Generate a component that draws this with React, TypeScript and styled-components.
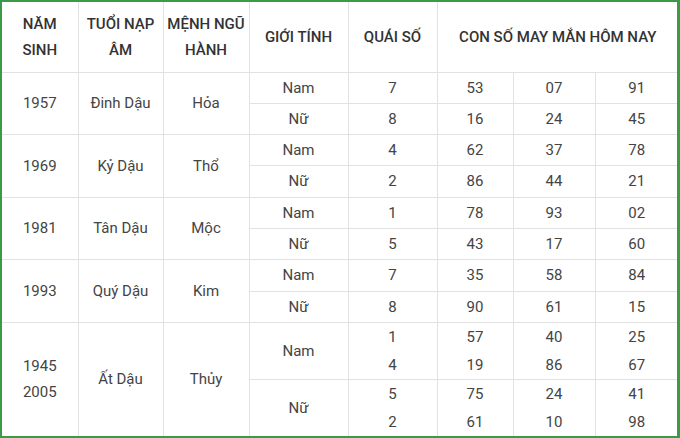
import React from 'react';
import styled, { createGlobalStyle } from 'styled-components';

const GlobalStyle = createGlobalStyle`
  html, body {
    margin: 0;
    padding: 0;
    background: #ffffff;
  }
  body {
    font-family: Roboto, "Noto Sans", "Liberation Sans", sans-serif;
  }
`;

const Frame = styled.div`
  width: 680px;
  height: 438px;
  box-sizing: border-box;
  border: 2px solid #3b9a48;
  border-right-width: 3px;
  background: #fff;
  overflow: hidden;
`;

const Table = styled.table`
  width: 100%;
  height: 100%;
  table-layout: fixed;
  border-collapse: collapse;
  color: #444;
  font-size: 15px;
`;

const Head = styled.th`
  font-weight: 500;
  color: #333;
  font-size: 15px;
  line-height: 26px;
  text-align: center;
  vertical-align: middle;
  padding: 0;
  border-right: 1px solid #e2e2e2;
  border-bottom: 1px solid #e2e2e2;
  &:last-child {
    border-right: none;
  }
`;

const Cell = styled.td<{ $last?: boolean }>`
  text-align: center;
  vertical-align: middle;
  padding: 0;
  line-height: ${({ $last }) => ($last ? '28px' : '20px')};
  border-right: 1px solid #e2e2e2;
  border-bottom: 1px solid #e2e2e2;
  &:last-child {
    border-right: none;
  }
`;

const YearCell = styled(Cell)`
  line-height: 26px;
`;

const Row = styled.tr<{ $h: number }>`
  height: ${({ $h }) => $h}px;
  &:last-child td {
    border-bottom: none;
  }
`;

const HeadRow = styled.tr`
  height: 70px;
`;

type Line = { gender: string; qs: string[]; nums: string[][] };
type Group = { years: string[]; tuoi: string; menh: string; h: number[]; lines: Line[] };

const groups: Group[] = [
  {
    years: ['1957'], tuoi: 'Đinh Dậu', menh: 'Hỏa', h: [31, 31],
    lines: [
      { gender: 'Nam', qs: ['7'], nums: [['53'], ['07'], ['91']] },
      { gender: 'Nữ', qs: ['8'], nums: [['16'], ['24'], ['45']] },
    ],
  },
  {
    years: ['1969'], tuoi: 'Kỷ Dậu', menh: 'Thổ', h: [31, 32],
    lines: [
      { gender: 'Nam', qs: ['4'], nums: [['62'], ['37'], ['78']] },
      { gender: 'Nữ', qs: ['2'], nums: [['86'], ['44'], ['21']] },
    ],
  },
  {
    years: ['1981'], tuoi: 'Tân Dậu', menh: 'Mộc', h: [31, 31],
    lines: [
      { gender: 'Nam', qs: ['1'], nums: [['78'], ['93'], ['02']] },
      { gender: 'Nữ', qs: ['5'], nums: [['43'], ['17'], ['60']] },
    ],
  },
  {
    years: ['1993'], tuoi: 'Quý Dậu', menh: 'Kim', h: [32, 31],
    lines: [
      { gender: 'Nam', qs: ['7'], nums: [['35'], ['58'], ['84']] },
      { gender: 'Nữ', qs: ['8'], nums: [['90'], ['61'], ['15']] },
    ],
  },
  {
    years: ['1945', '2005'], tuoi: 'Ất Dậu', menh: 'Thủy', h: [57, 57],
    lines: [
      { gender: 'Nam', qs: ['1', '4'], nums: [['57', '19'], ['40', '86'], ['25', '67']] },
      { gender: 'Nữ', qs: ['5', '2'], nums: [['75', '61'], ['24', '10'], ['41', '98']] },
    ],
  },
];

const widths = [76, 85, 86, 99, 89, 76, 82, 83];

const stack = (items: string[]) =>
  items.map((v, i) => (
    <React.Fragment key={i}>
      {i > 0 && <br />}
      {v}
    </React.Fragment>
  ));

export default function App() {
  return (
    <>
      <GlobalStyle />
      <Frame>
        <Table>
          <colgroup>
            {widths.map((w, i) => (
              <col key={i} style={{ width: w }} />
            ))}
          </colgroup>
          <thead>
            <HeadRow>
              <Head>NĂM<br />SINH</Head>
              <Head>TUỔI NẠP<br />ÂM</Head>
              <Head>MỆNH NGŨ<br />HÀNH</Head>
              <Head>GIỚI TÍNH</Head>
              <Head>QUÁI SỐ</Head>
              <Head colSpan={3}>CON SỐ MAY MẮN HÔM NAY</Head>
            </HeadRow>
          </thead>
          <tbody>
            {groups.map((g) =>
              g.lines.map((l, li) => {
                const multi = l.qs.length > 1;
                return (
                  <Row key={g.years[0] + li} $h={g.h[li]}>
                    {li === 0 && (
                      <>
                        <YearCell rowSpan={2}>{stack(g.years)}</YearCell>
                        <Cell rowSpan={2}>{g.tuoi}</Cell>
                        <Cell rowSpan={2}>{g.menh}</Cell>
                      </>
                    )}
                    <Cell>{l.gender}</Cell>
                    <Cell $last={multi}>{stack(l.qs)}</Cell>
                    {l.nums.map((n, ni) => (
                      <Cell key={ni} $last={multi}>{stack(n)}</Cell>
                    ))}
                  </Row>
                );
              })
            )}
          </tbody>
        </Table>
      </Frame>
    </>
  );
}
